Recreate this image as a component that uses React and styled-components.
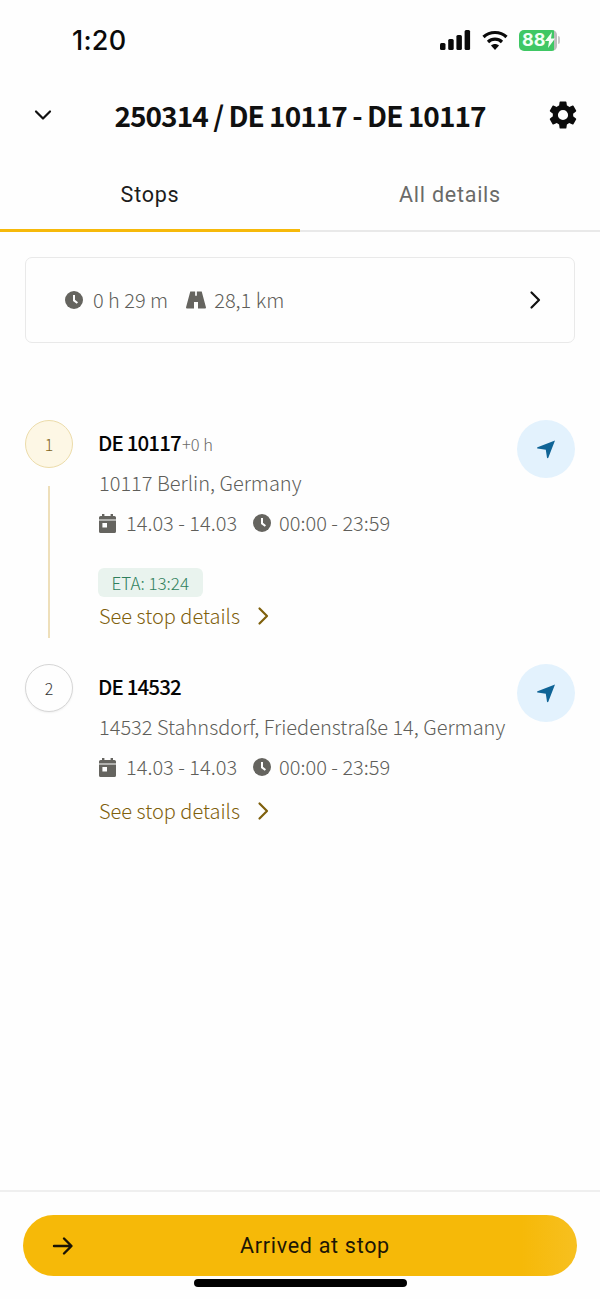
import React from 'react';
import styled, { createGlobalStyle } from 'styled-components';

const Global = createGlobalStyle`
  html, body { margin: 0; padding: 0; background: #fefefe; }
  * { box-sizing: border-box; }
`;
const CJK = `"Noto Sans CJK SC", "Noto Sans", sans-serif`;
const UI = `Roboto, "Liberation Sans", sans-serif`;

const Page = styled.div`
  width: 600px; height: 1299px; display: flex; flex-direction: column;
  background: #fefefe; overflow: hidden; position: relative; font-family: ${CJK};
`;
const StatusBar = styled.div`
  height: 80px; padding: 0 40px 0 72px; display: flex; align-items: center; justify-content: space-between;
`;
const Time = styled.div`
  font: 500 27px/1 Inter, sans-serif; color: #0a0a0a; letter-spacing: 0.2px;
`;
const StatusIcons = styled.div`display: flex; align-items: center; gap: 11px;`;
const Battery = styled.div`
  width: 38px; height: 21px; border-radius: 5px; display: flex; align-items: center; padding-left: 3px;
  background: linear-gradient(90deg, #3fc764 0 92%, #bdbdbd 92%); position: relative;
  font: 700 18px/1 Inter, sans-serif; color: #f2fff5;
`;
const BatteryCap = styled.div`
  width: 2px; height: 8px; background: #c9c9c9; border-radius: 0 2px 2px 0; margin-left: -10px;
`;
const Header = styled.div`
  height: 70px; padding: 0 20px 0 33px; display: flex; align-items: center; justify-content: space-between;
`;
const Title = styled.div`
  font: 700 28px/1 ${CJK}; color: #101010; letter-spacing: -0.96px;
  position: absolute; left: 0; right: 0; text-align: center; pointer-events: none;
`;
const Tabs = styled.div`display: flex; height: 82px;`;
const Tab = styled.div`
  flex: 1; display: flex; align-items: center; justify-content: center; padding-top: 10px;
  font: 400 21.5px/1 ${UI}; letter-spacing: 0.75px;
  color: ${p => (p.$active ? '#1c1c1c' : '#6a6a68')};
  border-bottom: ${p => (p.$active ? '3px solid #f6b90a' : '2px solid #e9e9e9')};
  height: 82px;
  ${p => !p.$active && 'padding-bottom: 1px;'}
`;
const Summary = styled.div`
  margin: 25px 25px 0; height: 86px; border: 1px solid #e9e9e9; border-radius: 7px;
  padding: 0 29px 0 39px; display: flex; align-items: center; justify-content: space-between;
`;
const SummaryInfo = styled.div`display: flex; align-items: center; gap: 18px;`;
const Meta = styled.div`
  display: flex; align-items: center; gap: ${p => p.$gap}px;
  font: 300 20px/1 ${CJK}; color: #5f5e5a; white-space: nowrap;
`;
const Stops = styled.div`padding: 77px 25px 0; display: flex; flex-direction: column;`;
const Stop = styled.div`display: flex; min-height: ${p => p.$h}px;`;
const Rail = styled.div`
  width: 48px; flex: none; display: flex; flex-direction: column; align-items: center;
`;
const Circle = styled.div`
  width: 48px; height: 48px; flex: none; border-radius: 50%; display: flex; align-items: center; justify-content: center;
  font: 300 16px/1 ${CJK};
  background: ${p => (p.$current ? '#fdf7e5' : '#fefefe')};
  border: 1px solid ${p => (p.$current ? '#ecdcaa' : '#d6d6d6')};
  color: ${p => (p.$current ? '#80641a' : '#333')};
  box-shadow: ${p => (p.$current ? 'none' : '0 1px 2px rgba(0,0,0,.06)')};
`;
const Line = styled.div`
  width: 2px; height: 152px; margin-top: 18px; background: #eedfba;
`;
const Body = styled.div`
  flex: 1; padding: 8px 0 0 26px; display: flex; flex-direction: column; align-items: flex-start; min-width: 0;
`;
const NameRow = styled.div`display: flex; align-items: baseline; height: 28px; margin-left: -1px;`;
const Name = styled.div`
  font: 500 20.5px/28px ${CJK}; color: #050505; letter-spacing: -0.85px;
`;
const Offset = styled.span`font: 300 16.5px/28px ${CJK}; color: #6a6a68; margin-left: 1px;`;
const Address = styled.div`
  margin-top: 13px; font: 300 20px/28px ${CJK}; color: #5f5e5a; white-space: nowrap;
`;
const TimeRow = styled.div`display: flex; align-items: center; gap: 16px; margin-top: 12px; height: 28px;`;
const Eta = styled.div`
  margin-top: ${p => p.$top}px; margin-left: -1px; height: 29px; padding: 0 13.5px; border-radius: 6px; background: #e9f3ee; color: #2f7f5c;
  font: 300 17px/29px ${CJK}; white-space: nowrap;
`;
const DetailsLink = styled.div`
  margin-top: ${p => p.$top}px; display: flex; align-items: center; gap: 13px; height: 28px;
  font: 300 20px/28px ${CJK}; color: #7f600c; white-space: nowrap;
`;
const NavButton = styled.div`
  width: 58px; height: 58px; flex: none; border-radius: 50%; background: #e3f2fd;
  display: flex; align-items: center; justify-content: center;
`;
const Footer = styled.div`
  margin-top: auto; height: 109px; border-top: 2px solid #efefef; padding: 23px 23px 0;
`;
const Action = styled.div`
  height: 61px; border-radius: 31px; background: #f6b908; display: flex; align-items: center; position: relative;
  font: 400 21.5px/1 ${UI}; color: #1c1605; letter-spacing: 0.7px; justify-content: center;
  background-image: linear-gradient(90deg, #f6b908 90%, #f7c020);
  padding-left: 30px;
`;
const ActionIcon = styled.span`position: absolute; left: 29px; top: 20px; display: flex;`;
const HomeBar = styled.div`
  position: absolute; left: 194px; bottom: 12px; width: 213px; height: 8px; border-radius: 4px; background: #000;
`;

const Chevron = ({ dir = 'right', color = '#111', size = 20, w = 2.2 }) => (
  <svg width={size} height={size} viewBox="0 0 20 20" fill="none" stroke={color} strokeWidth={w} strokeLinecap="round" strokeLinejoin="round">
    <path d={dir === 'down' ? 'M3 6.5l7 7 7-7' : 'M6.5 2.5l7.5 7.5-7.5 7.5'} />
  </svg>
);
const ClockIcon = () => (
  <svg width="18" height="18" viewBox="0 0 18 18">
    <circle cx="9" cy="9" r="9" fill="#65645f" />
    <path d="M9 4v5.4l3.4 2.6" fill="none" stroke="#fefefe" strokeWidth="2" />
  </svg>
);
const CalendarIcon = () => (
  <svg width="17" height="19" viewBox="0 0 17 19">
    <path fill="#65645f" fillRule="evenodd" d="M3 0h2.4v2h6.2V0H14v2h1.4A1.6 1.6 0 0 1 17 3.6v13.8a1.6 1.6 0 0 1-1.6 1.6H1.6A1.6 1.6 0 0 1 0 17.4V3.6A1.6 1.6 0 0 1 1.6 2H3zM0 5.6v1h17v-1zM3.4 9h4.6v4.6H3.4z" />
  </svg>
);
const RoadIcon = () => (
  <svg width="20" height="18" viewBox="0 0 21 18">
    <path fill="#65645f" d="M4.5 0H9.6V4.5h1.8V0h5.1L21 17a1 1 0 0 1-1 1H12.6V11H8.4v7H1a1 1 0 0 1-1-1z" />
  </svg>
);
const NavIcon = () => (
  <svg width="20" height="20" viewBox="0 0 20 20">
    <path fill="#0f6496" d="M19 1.5L12.3 18.8a.7.7 0 0 1-1.3 0L9.8 10.8 1.6 9.6a.7.7 0 0 1-.1-1.3z" />
  </svg>
);
const GearIcon = () => (
  <svg width="34" height="34" viewBox="0 0 24 24" fill="#0b0b0b">
    <path d="M19.14 12.94c.04-.3.06-.61.06-.94 0-.32-.02-.64-.07-.94l2.03-1.58a.49.49 0 0 0 .12-.61l-1.92-3.32a.49.49 0 0 0-.59-.22l-2.39.96a7 7 0 0 0-1.62-.94l-.36-2.54a.48.48 0 0 0-.48-.41h-3.84a.48.48 0 0 0-.47.41l-.36 2.54c-.59.24-1.13.57-1.62.94l-2.39-.96a.48.48 0 0 0-.59.22L2.74 8.87a.48.48 0 0 0 .12.61l2.03 1.58c-.05.3-.09.63-.09.94s.02.64.07.94l-2.03 1.58a.49.49 0 0 0-.12.61l1.92 3.32c.12.22.37.29.59.22l2.39-.96c.5.38 1.03.7 1.62.94l.36 2.54c.05.24.24.41.48.41h3.84c.24 0 .44-.17.47-.41l.36-2.54c.59-.24 1.13-.56 1.62-.94l2.39.96c.22.08.47 0 .59-.22l1.92-3.32a.48.48 0 0 0-.12-.61zM12 15.6A3.6 3.6 0 1 1 12 8.4a3.6 3.6 0 0 1 0 7.2z" />
  </svg>
);
const Signal = () => (
  <svg width="31" height="20" viewBox="0 0 31 20" fill="#0a0a0a">
    <rect x="0" y="13" width="5.5" height="7" rx="1.5" />
    <rect x="8.2" y="9" width="5.5" height="11" rx="1.5" />
    <rect x="16.4" y="5" width="5.5" height="15" rx="1.5" />
    <rect x="24.6" y="0" width="5.5" height="20" rx="1.5" />
  </svg>
);
const Wifi = () => (
  <svg width="26" height="20" viewBox="0 0 26 20" fill="none" stroke="#0a0a0a" strokeWidth="3.2">
    <path d="M1.5 7C7.8 1 18.2 1 24.5 7" />
    <path d="M6 12c4-3.8 10-3.8 14 0" />
    <path fill="#0a0a0a" stroke="none" d="M9 15.5c2.4-2 5.6-2 8 0L13 20z" />
  </svg>
);
const Bolt = () => (
  <svg width="10" height="16" viewBox="0 0 10 16" fill="#f2fff5" style={{ flex: 'none' }}>
    <path d="M7 0L0 9h4l-1 7 7-9.5H6z" />
  </svg>
);
const ArrowIcon = () => (
  <svg width="22" height="22" viewBox="0 0 22 22" fill="none" stroke="#1a1405" strokeWidth="2.4" strokeLinecap="round" strokeLinejoin="round">
    <path d="M2 11h17M12 3.5l7.5 7.5-7.5 7.5" />
  </svg>
);

const StopItem = ({ n, current, name, offset, address, eta, h }) => (
  <Stop $h={h}>
    <Rail>
      <Circle $current={current}>{n}</Circle>
      {current && <Line />}
    </Rail>
    <Body>
      <NameRow>
        <Name>{name}</Name>
        {offset && <Offset>{offset}</Offset>}
      </NameRow>
      <Address>{address}</Address>
      <TimeRow>
        <Meta $gap={10}><CalendarIcon />14.03 - 14.03</Meta>
        <Meta $gap={8}><ClockIcon />00:00 - 23:59</Meta>
      </TimeRow>
      {eta && <Eta $top={31}>{eta}</Eta>}
      <DetailsLink $top={eta ? 5 : 16}>
        See stop details
        <Chevron color="#7f600c" />
      </DetailsLink>
    </Body>
    <NavButton><NavIcon /></NavButton>
  </Stop>
);

export default function App() {
  return (
    <Page>
      <Global />
      <StatusBar>
        <Time>1:20</Time>
        <StatusIcons>
          <Signal />
          <Wifi />
          <Battery>88<Bolt /></Battery>
          <BatteryCap />
        </StatusIcons>
      </StatusBar>
      <Header>
        <Chevron dir="down" />
        <Title>250314 / DE 10117 - DE 10117</Title>
        <GearIcon />
      </Header>
      <Tabs>
        <Tab $active>Stops</Tab>
        <Tab>All details</Tab>
      </Tabs>
      <Summary>
        <SummaryInfo>
          <Meta $gap={10}><ClockIcon />0 h 29 m</Meta>
          <Meta $gap={8}><RoadIcon />28,1 km</Meta>
        </SummaryInfo>
        <Chevron />
      </Summary>
      <Stops>
        <StopItem n={1} current name="DE 10117" offset="+0 h" address="10117 Berlin, Germany" eta="ETA: 13:24" h={244} />
        <StopItem n={2} name="DE 14532" address="14532 Stahnsdorf, Friedenstraße 14, Germany" h={170} />
      </Stops>
      <Footer>
        <Action>
          <ActionIcon><ArrowIcon /></ActionIcon>
          Arrived at stop
        </Action>
      </Footer>
      <HomeBar />
    </Page>
  );
}
